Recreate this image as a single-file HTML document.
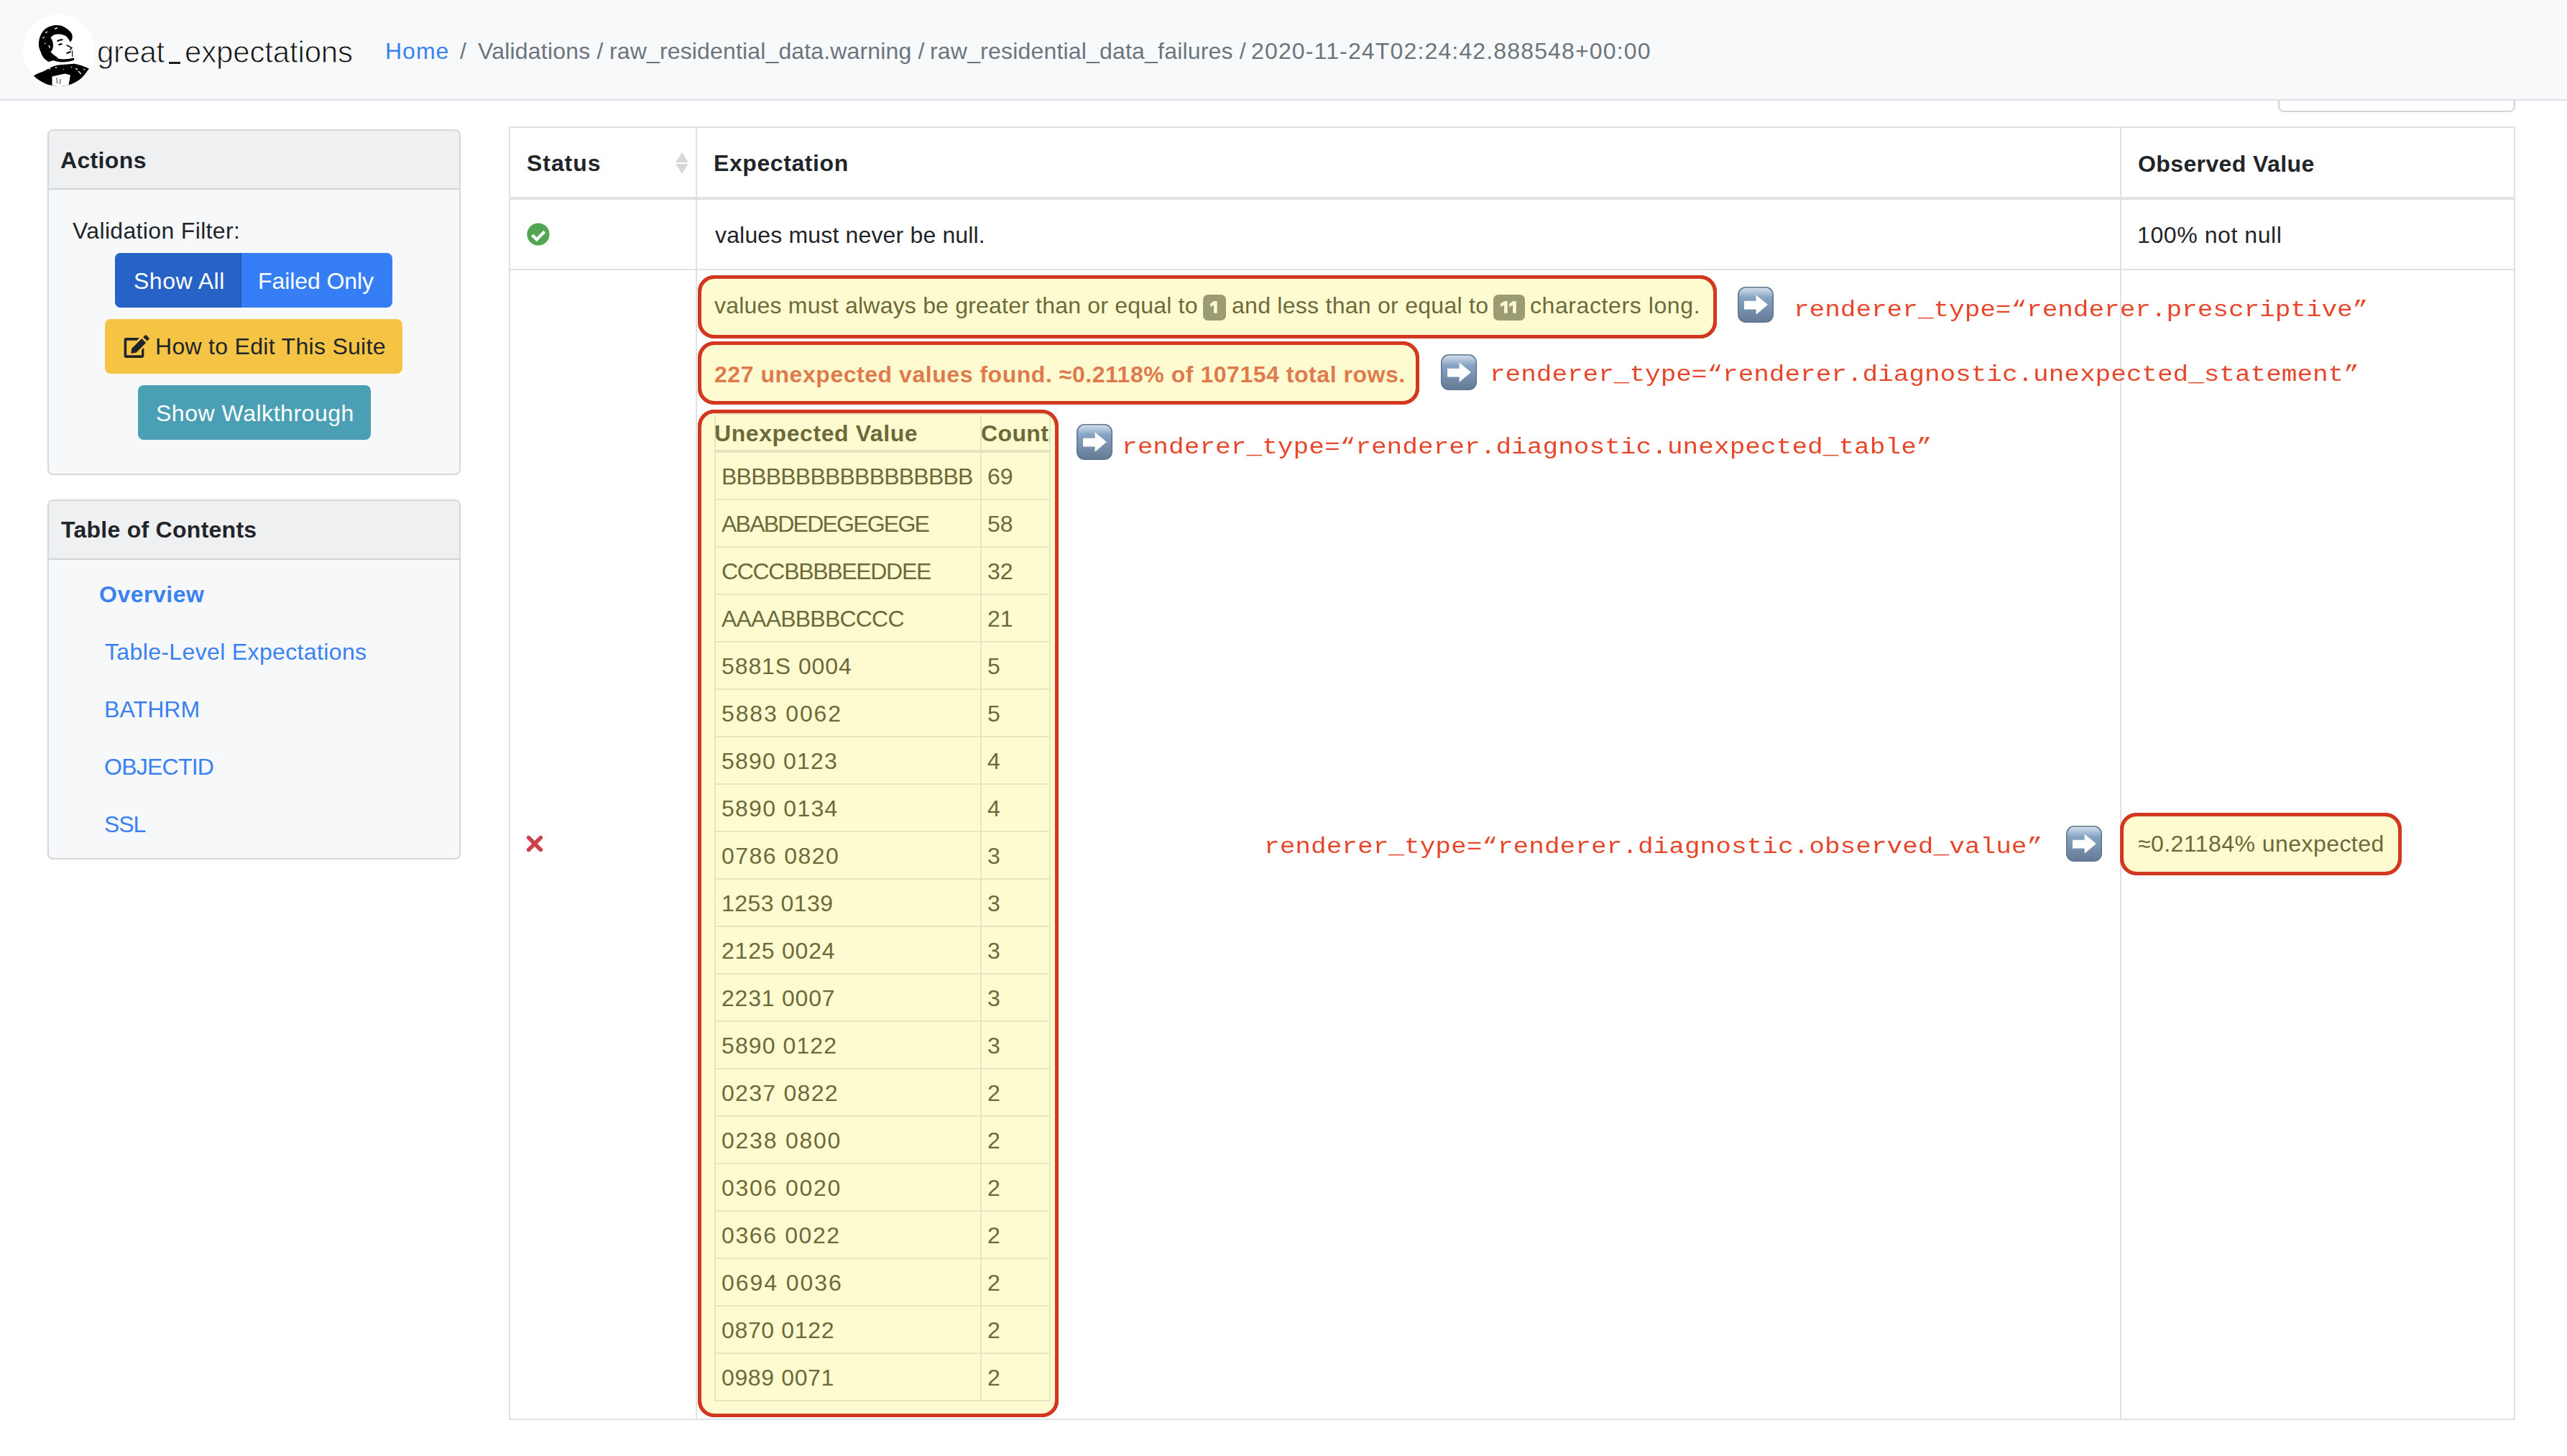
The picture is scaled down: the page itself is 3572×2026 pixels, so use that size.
<!DOCTYPE html>
<html><head><meta charset="utf-8">
<style>
html,body{margin:0;padding:0;overflow:hidden;}
body{width:3572px;height:2026px;overflow:hidden;position:relative;background:#fff;font-family:"Liberation Sans",sans-serif;color:#212529;}
.a{position:absolute;}
.t{position:absolute;white-space:pre;font-size:32px;line-height:48px;height:48px;}
.b{font-weight:700;}
.mono{position:absolute;white-space:pre;font-family:"Liberation Mono",monospace;font-size:36px;line-height:40px;color:#e8462a;transform:scaleY(0.88);transform-origin:0 29px;}
.card{position:absolute;left:66px;width:571px;border:2px solid #d6d7d9;border-radius:8px;background:#f7f8fa;overflow:hidden;}
.card .hd{position:absolute;left:0;top:0;width:100%;background:#eff0f2;border-bottom:2px solid #d3d4d6;}
.btn{position:absolute;border-radius:8px;}
.box{position:absolute;border:5px solid #d2381f;border-radius:23px;background:#fffbd1;box-sizing:border-box;}
.ol{color:#6b6a38;}
.badge{position:absolute;background:#9b9c71;color:#fffbd1;border-radius:7px;font-size:24px;font-weight:700;line-height:36px;height:36px;text-align:center;}
</style></head>
<body>
<div class="a" style="left:0;top:0;width:3572px;height:138px;background:#f8f9fa;border-bottom:2px solid #dee2e6;z-index:2;">
<div class="a" style="left:32px;top:20px;width:100px;height:100px;border-radius:50%;background:#fff;overflow:hidden;"><svg width="100" height="100" viewBox="0 0 100 100">
      <path d="M26.1 26.1 C29 21 34 17.5 38.5 16.5 C42 15.3 45 15 48 15.1 C51 15.2 53 15.6 55 16.5 C58 17.8 60 19 61.8 20.6 C64 22.5 66 24 67.3 26.1 C68.3 28 68.9 29.5 68.7 30.9 C68.6 32.5 68.5 34 68 35.7 L65.9 38.5 C64.5 36 63 34 61.8 32.3 C60 30.5 58.5 29.5 56.3 28.8 C53.5 27.8 51 27.3 48 27.5 C46 27.7 44 28.2 42.6 28.8 C41 29.8 39.5 31 38.5 32.3 L40.5 35.7 C41.2 37.5 41.8 39.5 41.9 41.2 C42 44 41.8 46 41.2 48.1 C40.5 50 39.5 51.2 38.5 52.2 C39.5 53.2 40.3 54 41.2 54.9 C43 56.5 45 58 46.7 59.1 L49.5 61.8 C45 63.5 40 65 35.7 65.9 C33 64.5 30.5 62.5 28.8 60.4 C26.8 57.8 25.5 55 24.7 52.2 C23.5 49.5 22.5 47 22 44 C21.7 40.5 22 37.5 22.7 34.3 C23.5 31.5 24.5 28.5 26.1 26.1 Z" fill="#000"/>
      <path d="M31 26 L34 24 M27 33 L30 31.5 M44 20 L48 19 M36 43 L37.5 47 M30 40 L31.5 41" stroke="#fff" stroke-width="1.3"/>
      <path d="M47.5 37.5 C50 35.8 53 35 55.5 35.3" stroke="#000" stroke-width="1.8" fill="none"/>
      <path d="M49.5 42.6 C51 41.3 53 41 54.5 41.8" stroke="#000" stroke-width="2.2" fill="none"/>
      <path d="M60.4 42.6 C63 44 66 45.5 68 46.7 L65.2 49.5" stroke="#000" stroke-width="1.5" fill="none"/>
      <path d="M60.4 54.3 C62.5 53.5 64.5 52.8 66.5 52" stroke="#000" stroke-width="1.9" fill="none"/>
      <path d="M68.3 50 C68.8 53 68.9 56 68.7 59.1" stroke="#000" stroke-width="1.1" fill="none"/>
      <path d="M39.8 59.5 C45 61 50 62 55 62.5 C61 62.5 66 61.5 70.7 60.5 L71.5 63.5 C66 65.5 60 66.5 54 66.5 C48 66.3 43 64.5 39.8 62.5 Z" fill="#000"/>
      <path d="M15.1 85.2 C19 82.5 23.5 81 27.5 79.7 C32 77.5 37 74.5 41.2 72.8 C44 71.5 46 71 48.1 70.7 C53 70 57.5 69.5 61.8 69.4 C65 69.2 68.5 68.8 72.1 68.7 C79 70 86 72.5 92 75.5 C88 81 84 86.5 79 91.3 L74 100 L10 100 Z" fill="#000"/>
      <path d="M40.5 86.5 C46 85 52 83.5 58.4 82.4 L65.9 84.5 L63.9 100 L40.5 100 Z" fill="#fff"/>
      <path d="M67.3 84.5 L64.6 97.5 M71.4 85.2 L69.3 94.8" stroke="#000" stroke-width="2"/>
      <path d="M47 88 L47.5 96 M52 90 L51.5 97" stroke="#000" stroke-width="0.8"/>
      <path d="M36 76 L38 75.5 M45 74 L47 74 M56 76 L57 76.5 M67 73 L68 74 M73 75 L76 77 M77 79 L81 83 M84 76 L86 77" stroke="#fff" stroke-width="1.3"/>
    </svg></div>
<div class="t" style="left:135px;top:45px;letter-spacing:-0.4px;color:#111;font-size:42px;line-height:56px;height:56px;-webkit-text-stroke:0.9px #f8f9fa;">great</div>
<div class="a" style="left:235px;top:86px;width:16px;height:3px;background:#1c1c1c;"></div>
<div class="t" style="left:257px;top:45px;letter-spacing:-0.16px;color:#111;font-size:42px;line-height:56px;height:56px;-webkit-text-stroke:0.9px #f8f9fa;">expectations</div>
<div class="t" style="left:536px;top:47px;letter-spacing:1px;color:#3a81f2;">Home</div>
<div class="t" style="left:640px;top:47px;color:#6c757d;">/</div>
<div class="t" style="left:665px;top:47px;letter-spacing:0.21px;color:#6c757d;">Validations /</div>
<div class="t" style="left:848px;top:47px;letter-spacing:0.15px;color:#6c757d;">raw_residential_data.warning /</div>
<div class="t" style="left:1294px;top:47px;letter-spacing:0.19px;color:#6c757d;">raw_residential_data_failures /</div>
<div class="t" style="left:1741px;top:47px;letter-spacing:1.15px;color:#6c757d;">2020-11-24T02:24:42.888548+00:00</div>
</div>
<div class="a" style="left:3170px;top:100px;width:326px;height:52px;border:2px solid #ced4da;border-radius:8px;background:#fff;z-index:1;"></div>
<div class="card" style="top:180px;height:477px;"><div class="hd" style="height:80px;"></div></div>
<div class="t b" style="left:84px;top:199px;letter-spacing:0.35px;">Actions</div>
<div class="t" style="left:101px;top:297px;letter-spacing:0.34px;">Validation Filter:</div>
<div class="btn" style="left:160px;top:352px;width:386px;height:76px;background:#357ef5;overflow:hidden;"><div class="a" style="left:0px;top:0px;width:176px;height:76px;background:#2763c7;"></div><div class="a" style="left:174px;top:0px;width:2px;height:76px;background:#235bbd;"></div></div>
<div class="t" style="left:186px;top:367px;letter-spacing:0.51px;color:#fff;">Show All</div>
<div class="t" style="left:359px;top:367px;letter-spacing:-0.09px;color:#fff;">Failed Only</div>
<div class="btn" style="left:146px;top:444px;width:414px;height:76px;background:#f6c444;"></div>
<svg class="a" style="left:165px;top:458px;" width="50" height="47" viewBox="0 0 50 47">
  <path d="M28.9 12.1 H10.8 Q7.6 12.1 7.6 15.3 V36.7 Q7.6 39.9 10.8 39.9 H32.1 Q35.3 39.9 35.3 36.7 V26.6 Q35.1 26.0 34.5 26.3 L32.0 28.9 V36.2 H11.2 V15.8 H25.6 Z" fill="#212529"/>
  <path d="M18.2 27.1 L32.3 13.1 L38.1 19.0 L24.5 32.8 L17.9 33.8 Q17.2 33.8 17.3 33.1 Z" fill="#212529"/>
  <path d="M34.2 11.3 L37.0 8.5 Q37.8 7.7 38.6 8.5 L42.4 12.3 Q43.2 13.1 42.4 13.9 L39.7 16.6 Z" fill="#212529"/>
</svg>
<div class="t" style="left:216px;top:458px;letter-spacing:0.3px;">How to Edit This Suite</div>
<div class="btn" style="left:192px;top:536px;width:324px;height:76px;background:#4a9fb5;"></div>
<div class="t" style="left:217px;top:551px;letter-spacing:0.53px;color:#fff;">Show Walkthrough</div>
<div class="card" style="top:695px;height:497px;"><div class="hd" style="height:80px;"></div></div>
<div class="t b" style="left:85px;top:713px;letter-spacing:0.27px;">Table of Contents</div>
<div class="t b" style="left:138px;top:803px;letter-spacing:0.5px;color:#3a81f2;">Overview</div>
<div class="t" style="left:146px;top:883px;letter-spacing:0.36px;color:#3a81f2;">Table-Level Expectations</div>
<div class="t" style="left:145px;top:963px;letter-spacing:0.1px;color:#3a81f2;">BATHRM</div>
<div class="t" style="left:145px;top:1043px;letter-spacing:-0.76px;color:#3a81f2;">OBJECTID</div>
<div class="t" style="left:145px;top:1123px;letter-spacing:-1.15px;color:#3a81f2;">SSL</div>
<div class="a" style="left:708px;top:176px;width:2792px;height:2px;background:#dee2e6;"></div>
<div class="a" style="left:708px;top:1974px;width:2792px;height:2px;background:#dee2e6;"></div>
<div class="a" style="left:708px;top:176px;width:2px;height:1800px;background:#dee2e6;"></div>
<div class="a" style="left:3498px;top:176px;width:2px;height:1800px;background:#dee2e6;"></div>
<div class="a" style="left:968px;top:176px;width:2px;height:1800px;background:#dee2e6;"></div>
<div class="a" style="left:2950px;top:176px;width:2px;height:1800px;background:#dee2e6;"></div>
<div class="a" style="left:708px;top:274px;width:2792px;height:4px;background:#dee2e6;"></div>
<div class="a" style="left:708px;top:374px;width:2792px;height:2px;background:#dee2e6;"></div>
<div class="t b" style="left:733px;top:203px;letter-spacing:0.94px;">Status</div>
<svg class="a" style="left:938px;top:209px;" width="22" height="36" viewBox="0 0 22 36"><defs><filter id="bl" x="-30%" y="-30%" width="160%" height="160%"><feGaussianBlur stdDeviation="0.7"/></filter></defs><path d="M11 3 L19.8 17 H2.2 Z M2.2 19 H19.8 L11 33 Z" fill="#d8d8d8" filter="url(#bl)"/></svg>
<div class="t b" style="left:993px;top:203px;letter-spacing:0.59px;">Expectation</div>
<div class="t b" style="left:2975px;top:204px;letter-spacing:0.39px;">Observed Value</div>
<svg class="a" style="left:733px;top:310px;" width="32" height="32" viewBox="0 0 32 32"><circle cx="16" cy="16" r="15.6" fill="#52a552"/><path d="M7.5 17 L13.8 23.2 L24.8 12.2" stroke="#fff" stroke-width="4.3" fill="none" stroke-linecap="butt" stroke-linejoin="miter"/></svg>
<div class="t" style="left:995px;top:303px;letter-spacing:0.16px;">values must never be null.</div>
<div class="t" style="left:2974px;top:303px;letter-spacing:0.58px;">100% not null</div>
<svg class="a" style="left:732px;top:1162px;" width="24" height="24" viewBox="0 0 24 24"><path d="M3.6 3.6 L20.4 20.4 M20.4 3.6 L3.6 20.4" stroke="#cc434b" stroke-width="5.6" stroke-linecap="round"/></svg>
<div class="box" style="left:971px;top:383px;width:1418px;height:88px;"></div>
<div class="box" style="left:971px;top:475px;width:1004px;height:88px;"></div>
<div class="box" style="left:971px;top:570px;width:502px;height:1402px;"></div>
<div class="box" style="left:2950px;top:1131px;width:392px;height:87px;"></div>
<div class="t" style="left:994px;top:401px;letter-spacing:0.2px;color:#6b6a38;">values must always be greater than or equal to</div>
<div class="badge" style="left:1674px;top:410px;width:32px;"><svg class="a" style="left:10.4px;top:9.1px;" width="10" height="17" viewBox="0 0 10 17"><path d="M0 3.7 L5.1 0 H9.6 V16.8 H5.1 V5.4 L0 8.1 Z" fill="#fffbd1"/></svg></div>
<div class="t" style="left:1714px;top:401px;letter-spacing:0.27px;color:#6b6a38;">and less than or equal to</div>
<div class="badge" style="left:2078px;top:410px;width:44px;"><svg class="a" style="left:9.7px;top:9.1px;" width="22" height="17" viewBox="0 0 22 17"><path d="M0 3.7 L5.1 0 H9.6 V16.8 H5.1 V5.4 L0 8.1 Z" fill="#fffbd1"/><g transform="translate(12.1 0)"><path d="M0 3.7 L5.1 0 H9.6 V16.8 H5.1 V5.4 L0 8.1 Z" fill="#fffbd1"/></g></svg></div>
<div class="t" style="left:2129px;top:401px;letter-spacing:0.59px;color:#6b6a38;">characters long.</div>
<div class="t b" style="left:994px;top:497px;letter-spacing:0.54px;color:#df7a4d;">227 unexpected values found. ≈0.2118% of 107154 total rows.</div>
<div class="t" style="left:2975px;top:1150px;letter-spacing:0.45px;color:#6b6a38;">≈0.21184% unexpected</div>
<div class="a" style="left:994px;top:575px;width:468px;height:2px;background:#e6e6c1;"></div>
<div class="a" style="left:994px;top:575px;width:2px;height:1375px;background:#e6e6c1;"></div>
<div class="a" style="left:1460px;top:575px;width:2px;height:1375px;background:#e6e6c1;"></div>
<div class="a" style="left:1364px;top:575px;width:2px;height:1375px;background:#e6e6c1;"></div>
<div class="a" style="left:994px;top:626px;width:468px;height:4px;background:#e3e3bf;"></div>
<div class="t b" style="left:994px;top:579px;letter-spacing:0.58px;color:#6b6a38;">Unexpected Value</div>
<div class="t b" style="left:1365px;top:579px;letter-spacing:0.38px;color:#6b6a38;">Count</div>
<div class="a" style="left:994px;top:694px;width:468px;height:2px;background:#e6e6c1;"></div>
<div class="t" style="left:1004px;top:639px;letter-spacing:-0.78px;color:#6b6a38;">BBBBBBBBBBBBBBBBB</div>
<div class="t" style="left:1374px;top:639px;color:#6b6a38;">69</div>
<div class="a" style="left:994px;top:760px;width:468px;height:2px;background:#e6e6c1;"></div>
<div class="t" style="left:1004px;top:705px;letter-spacing:-1.78px;color:#6b6a38;">ABABDEDEGEGEGE</div>
<div class="t" style="left:1374px;top:705px;color:#6b6a38;">58</div>
<div class="a" style="left:994px;top:826px;width:468px;height:2px;background:#e6e6c1;"></div>
<div class="t" style="left:1004px;top:771px;letter-spacing:-1.32px;color:#6b6a38;">CCCCBBBBEEDDEE</div>
<div class="t" style="left:1374px;top:771px;color:#6b6a38;">32</div>
<div class="a" style="left:994px;top:892px;width:468px;height:2px;background:#e6e6c1;"></div>
<div class="t" style="left:1004px;top:837px;letter-spacing:-0.79px;color:#6b6a38;">AAAABBBBCCCC</div>
<div class="t" style="left:1374px;top:837px;color:#6b6a38;">21</div>
<div class="a" style="left:994px;top:958px;width:468px;height:2px;background:#e6e6c1;"></div>
<div class="t" style="left:1004px;top:903px;letter-spacing:0.91px;color:#6b6a38;">5881S 0004</div>
<div class="t" style="left:1374px;top:903px;color:#6b6a38;">5</div>
<div class="a" style="left:994px;top:1024px;width:468px;height:2px;background:#e6e6c1;"></div>
<div class="t" style="left:1004px;top:969px;letter-spacing:1.84px;color:#6b6a38;">5883 0062</div>
<div class="t" style="left:1374px;top:969px;color:#6b6a38;">5</div>
<div class="a" style="left:994px;top:1090px;width:468px;height:2px;background:#e6e6c1;"></div>
<div class="t" style="left:1004px;top:1035px;letter-spacing:1.19px;color:#6b6a38;">5890 0123</div>
<div class="t" style="left:1374px;top:1035px;color:#6b6a38;">4</div>
<div class="a" style="left:994px;top:1156px;width:468px;height:2px;background:#e6e6c1;"></div>
<div class="t" style="left:1004px;top:1101px;letter-spacing:1.25px;color:#6b6a38;">5890 0134</div>
<div class="t" style="left:1374px;top:1101px;color:#6b6a38;">4</div>
<div class="a" style="left:994px;top:1222px;width:468px;height:2px;background:#e6e6c1;"></div>
<div class="t" style="left:1004px;top:1167px;letter-spacing:1.45px;color:#6b6a38;">0786 0820</div>
<div class="t" style="left:1374px;top:1167px;color:#6b6a38;">3</div>
<div class="a" style="left:994px;top:1288px;width:468px;height:2px;background:#e6e6c1;"></div>
<div class="t" style="left:1004px;top:1233px;letter-spacing:0.46px;color:#6b6a38;">1253 0139</div>
<div class="t" style="left:1374px;top:1233px;color:#6b6a38;">3</div>
<div class="a" style="left:994px;top:1354px;width:468px;height:2px;background:#e6e6c1;"></div>
<div class="t" style="left:1004px;top:1299px;letter-spacing:0.78px;color:#6b6a38;">2125 0024</div>
<div class="t" style="left:1374px;top:1299px;color:#6b6a38;">3</div>
<div class="a" style="left:994px;top:1420px;width:468px;height:2px;background:#e6e6c1;"></div>
<div class="t" style="left:1004px;top:1365px;letter-spacing:0.78px;color:#6b6a38;">2231 0007</div>
<div class="t" style="left:1374px;top:1365px;color:#6b6a38;">3</div>
<div class="a" style="left:994px;top:1486px;width:468px;height:2px;background:#e6e6c1;"></div>
<div class="t" style="left:1004px;top:1431px;letter-spacing:1.1px;color:#6b6a38;">5890 0122</div>
<div class="t" style="left:1374px;top:1431px;color:#6b6a38;">3</div>
<div class="a" style="left:994px;top:1552px;width:468px;height:2px;background:#e6e6c1;"></div>
<div class="t" style="left:1004px;top:1497px;letter-spacing:1.29px;color:#6b6a38;">0237 0822</div>
<div class="t" style="left:1374px;top:1497px;color:#6b6a38;">2</div>
<div class="a" style="left:994px;top:1618px;width:468px;height:2px;background:#e6e6c1;"></div>
<div class="t" style="left:1004px;top:1563px;letter-spacing:1.76px;color:#6b6a38;">0238 0800</div>
<div class="t" style="left:1374px;top:1563px;color:#6b6a38;">2</div>
<div class="a" style="left:994px;top:1684px;width:468px;height:2px;background:#e6e6c1;"></div>
<div class="t" style="left:1004px;top:1629px;letter-spacing:1.76px;color:#6b6a38;">0306 0020</div>
<div class="t" style="left:1374px;top:1629px;color:#6b6a38;">2</div>
<div class="a" style="left:994px;top:1750px;width:468px;height:2px;background:#e6e6c1;"></div>
<div class="t" style="left:1004px;top:1695px;letter-spacing:1.61px;color:#6b6a38;">0366 0022</div>
<div class="t" style="left:1374px;top:1695px;color:#6b6a38;">2</div>
<div class="a" style="left:994px;top:1816px;width:468px;height:2px;background:#e6e6c1;"></div>
<div class="t" style="left:1004px;top:1761px;letter-spacing:1.93px;color:#6b6a38;">0694 0036</div>
<div class="t" style="left:1374px;top:1761px;color:#6b6a38;">2</div>
<div class="a" style="left:994px;top:1882px;width:468px;height:2px;background:#e6e6c1;"></div>
<div class="t" style="left:1004px;top:1827px;letter-spacing:0.65px;color:#6b6a38;">0870 0122</div>
<div class="t" style="left:1374px;top:1827px;color:#6b6a38;">2</div>
<div class="a" style="left:994px;top:1948px;width:468px;height:2px;background:#e6e6c1;"></div>
<div class="t" style="left:1004px;top:1893px;letter-spacing:0.63px;color:#6b6a38;">0989 0071</div>
<div class="t" style="left:1374px;top:1893px;color:#6b6a38;">2</div>
<svg class="a" style="left:2418px;top:399px;" width="50" height="50" viewBox="0 0 50 50"><defs><linearGradient id="g1" x1="0" y1="0" x2="0" y2="1"><stop offset="0" stop-color="#d3dfec"/><stop offset="0.1" stop-color="#bccde0"/><stop offset="0.3" stop-color="#86a3c3"/><stop offset="1" stop-color="#647a94"/></linearGradient></defs><rect x="0.8" y="0.8" width="48.4" height="48.4" rx="10.5" fill="url(#g1)" stroke="#5f7590" stroke-width="1.6"/><path d="M9 19.7 H25.6 V11.4 L41.9 25 L25.6 38.8 V31.4 H9 Z" fill="#fff"/></svg>
<svg class="a" style="left:2005px;top:493px;" width="50" height="50" viewBox="0 0 50 50"><defs><linearGradient id="g2" x1="0" y1="0" x2="0" y2="1"><stop offset="0" stop-color="#d3dfec"/><stop offset="0.1" stop-color="#bccde0"/><stop offset="0.3" stop-color="#86a3c3"/><stop offset="1" stop-color="#647a94"/></linearGradient></defs><rect x="0.8" y="0.8" width="48.4" height="48.4" rx="10.5" fill="url(#g2)" stroke="#5f7590" stroke-width="1.6"/><path d="M9 19.7 H25.6 V11.4 L41.9 25 L25.6 38.8 V31.4 H9 Z" fill="#fff"/></svg>
<svg class="a" style="left:1498px;top:590px;" width="50" height="50" viewBox="0 0 50 50"><defs><linearGradient id="g3" x1="0" y1="0" x2="0" y2="1"><stop offset="0" stop-color="#d3dfec"/><stop offset="0.1" stop-color="#bccde0"/><stop offset="0.3" stop-color="#86a3c3"/><stop offset="1" stop-color="#647a94"/></linearGradient></defs><rect x="0.8" y="0.8" width="48.4" height="48.4" rx="10.5" fill="url(#g3)" stroke="#5f7590" stroke-width="1.6"/><path d="M9 19.7 H25.6 V11.4 L41.9 25 L25.6 38.8 V31.4 H9 Z" fill="#fff"/></svg>
<svg class="a" style="left:2875px;top:1149px;" width="50" height="50" viewBox="0 0 50 50"><defs><linearGradient id="g4" x1="0" y1="0" x2="0" y2="1"><stop offset="0" stop-color="#d3dfec"/><stop offset="0.1" stop-color="#bccde0"/><stop offset="0.3" stop-color="#86a3c3"/><stop offset="1" stop-color="#647a94"/></linearGradient></defs><rect x="0.8" y="0.8" width="48.4" height="48.4" rx="10.5" fill="url(#g4)" stroke="#5f7590" stroke-width="1.6"/><path d="M9 19.7 H25.6 V11.4 L41.9 25 L25.6 38.8 V31.4 H9 Z" fill="#fff"/></svg>
<div class="mono" style="left:2496px;top:411px;">renderer_type=“renderer.prescriptive”</div>
<div class="mono" style="left:2073px;top:501px;">renderer_type=“renderer.diagnostic.unexpected_statement”</div>
<div class="mono" style="left:1561px;top:602px;letter-spacing:0.08px;">renderer_type=“renderer.diagnostic.unexpected_table”</div>
<div class="mono" style="left:1759px;top:1158px;letter-spacing:0.06px;">renderer_type=“renderer.diagnostic.observed_value”</div>
<div class="box" style="left:971px;top:383px;width:1418px;height:88px;background:transparent;z-index:5;"></div>
<div class="box" style="left:971px;top:475px;width:1004px;height:88px;background:transparent;z-index:5;"></div>
<div class="box" style="left:971px;top:570px;width:502px;height:1402px;background:transparent;z-index:5;"></div>
<div class="box" style="left:2950px;top:1131px;width:392px;height:87px;background:transparent;z-index:5;"></div>
</body></html>
